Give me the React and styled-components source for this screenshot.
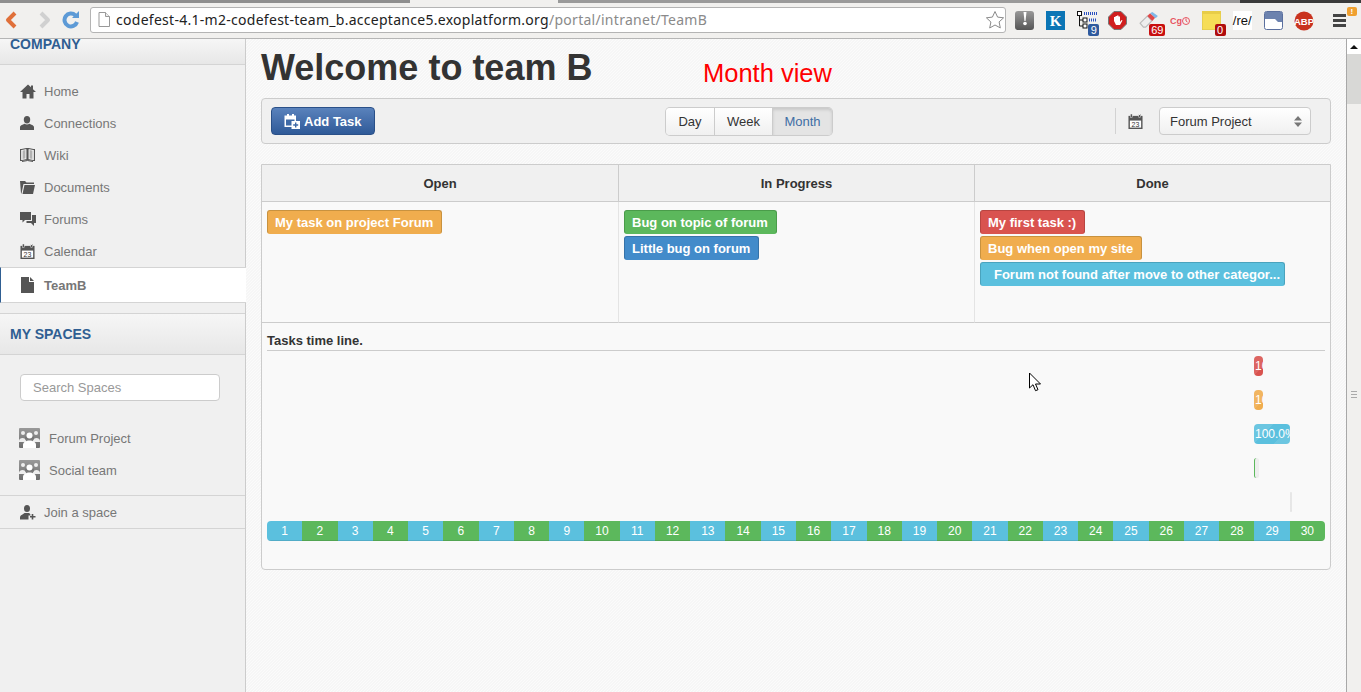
import React from 'react';
import styled, { createGlobalStyle } from 'styled-components';

const GlobalStyle = createGlobalStyle`
  html, body { margin: 0; padding: 0; height: 100%; overflow: hidden; }
  body { font-family: "Liberation Sans", Arial, sans-serif; color: #333; }
  * { box-sizing: border-box; }
`;

const Page = styled.div`
  width: 1361px;
  height: 692px;
  display: flex;
  flex-direction: column;
  position: relative;
  overflow: hidden;
`;

/* browser chrome */
const Tabs = styled.div`
  height: 3px;
  display: flex;
  background: #f1f0ee;
`;
const TabEdge = styled.div`
  background: ${p => p.$color};
  width: ${p => p.$width}px;
  ${p => p.$grow && 'flex: 1;'}
`;
const Toolbar = styled.div`
  height: 36px;
  display: flex;
  align-items: center;
  padding: 0 0 2px 4px;
  background: #f1f0ee;
  border-bottom: 1px solid #b5b5b5;
`;
const NavIcon = styled.svg`
  flex: none;
  margin-right: ${p => p.$gap}px;
`;
const Omnibox = styled.div`
  width: 916px;
  height: 26px;
  margin-left: 2px;
  display: flex;
  align-items: center;
  background: #fff;
  border: 1px solid #b4b4b4;
  border-radius: 3px;
  padding: 0 0 0 7px;
  font-family: "Noto Sans", "DejaVu Sans", sans-serif;
  font-size: 14px;
  letter-spacing: 0.02em;
  color: #222;
  white-space: nowrap;
`;
const UrlPath = styled.span`
  color: #8a8a8a;
`;
const UrlText = styled.span`
  margin-left: 6px;
  flex: 1;
  overflow: hidden;
`;
const Extensions = styled.div`
  display: flex;
  align-items: center;
  margin: 2px 0 0 3px;
`;
const ExtSlot = styled.div`
  width: 31.1px;
  height: 24px;
  display: flex;
  align-items: center;
  justify-content: center;
  position: relative;
  flex: none;
`;
const Badge = styled.span`
  position: absolute;
  right: ${p => p.$right ?? 0}px;
  bottom: -3px;
  min-width: 11px;
  text-align: center;
  background: ${p => p.$color};
  color: #fff;
  font: 11px/10px "Liberation Sans", sans-serif;
  padding: 1px 2px;
  border-radius: 2px;
`;
const ReIcon = styled.span`
  width: 19px;
  height: 19px;
  background: #fff;
  color: #111;
  font: 13px/19px "Liberation Sans", sans-serif;
  text-align: center;
  white-space: nowrap;
`;
const MenuBars = styled.div`
  width: 13px;
  height: 13px;
  margin-left: 13px;
  position: relative;
  background: repeating-linear-gradient(#444 0 3px, transparent 3px 5px);
`;
const UpdateDot = styled.span`
  position: absolute;
  top: -7px;
  right: -11px;
  width: 10px;
  height: 9px;
  border-radius: 2px;
  background: #f0a030;
  color: #fff;
  font: bold 8px/9px "Liberation Sans", sans-serif;
  text-align: center;
`;

/* page body */
const Body = styled.div`
  flex: 1;
  display: flex;
  min-height: 0;
`;
const Sidebar = styled.aside`
  width: 246px;
  flex: none;
  background: #f0f0f0;
  border-right: 1px solid #ccc;
`;
const SideHead = styled.div`
  display: flex;
  align-items: center;
  height: ${p => p.$height}px;
  padding: ${p => p.$pad || '0'};
  padding-left: 10px;
  font-size: 14px;
  font-weight: bold;
  color: #2f5e92;
  background: linear-gradient(#f6f6f6, #e7e7e7);
  border-bottom: 1px solid #d4d4d4;
  ${p => p.$top && 'border-top: 1px solid #d4d4d4;'}
`;
const NavList = styled.nav`
  padding-top: 10px;
`;
const NavItem = styled.div`
  height: 32px;
  display: flex;
  align-items: center;
  padding-left: 20px;
  font-size: 13px;
  color: #777;
`;
const NavGlyph = styled.span`
  width: 24px;
  flex: none;
  display: flex;
  align-items: center;
  color: #555;
  font-size: 14px;
`;
const ActiveItem = styled(NavItem)`
  height: 36px;
  background: #fff;
  border-top: 1px solid #d4d4d4;
  border-bottom: 1px solid #d4d4d4;
  border-left: 1px solid #2f5e92;
  padding-left: 19px;
  margin: 0 -1px 10px 0;
  font-weight: bold;
  position: relative;
`;
const SearchBox = styled.div`
  margin: 19px 25px 0 20px;
  height: 27px;
  padding-left: 12px;
  display: flex;
  align-items: center;
  background: #fff;
  border: 1px solid #ccc;
  border-radius: 4px;
  font-size: 13px;
  color: #999;
`;
const SpaceList = styled.div`
  padding-top: 21px;
  margin-bottom: 9px;
`;
const SpaceItem = styled(NavItem)`
  gap: 9px;
  padding-left: 19px;
`;
const JoinItem = styled(NavItem)`
  height: 34px;
  border-top: 1px solid #d4d4d4;
  border-bottom: 1px solid #d4d4d4;
`;

const Main = styled.main`
  flex: 1;
  min-width: 0;
  padding: 0 15px;
  background-color: #fbfbfb;
  background-image: linear-gradient(135deg, #f6f6f6 25%, transparent 25%, transparent 50%, #f6f6f6 50%, #f6f6f6 75%, transparent 75%);
  background-size: 3px 3px;
  position: relative;
`;
const Title = styled.h1`
  margin: 0;
  height: 59px;
  padding-top: 9px;
  font-size: 36px;
  line-height: 40px;
  font-weight: bold;
  color: #333;
`;
const Annotation = styled.span`
  position: absolute;
  left: 457px;
  top: 20px;
  font-size: 25.5px;
  line-height: 28px;
  color: #f00;
`;
const ActionBar = styled.div`
  height: 46px;
  display: flex;
  align-items: center;
  padding: 0 19px 0 9px;
  background: #f0f0f0;
  border: 1px solid #ccc;
  border-radius: 4px;
`;
const AddButton = styled.button`
  width: 104px;
  height: 28px;
  display: flex;
  align-items: center;
  gap: 4px;
  padding: 0 0 0 12px;
  font: bold 13px "Liberation Sans", sans-serif;
  color: #fff;
  background: linear-gradient(#5a82bc, #2f5a98);
  border: 1px solid #2a5088;
  border-radius: 4px;
`;
const ViewGroup = styled.div`
  display: flex;
  height: 27px;
  margin-left: 291px;
  border-radius: 4px;
  box-shadow: 0 0 0 1px #ccc;
`;
const ViewButton = styled.div`
  display: flex;
  align-items: center;
  justify-content: center;
  width: ${p => p.$width}px;
  font-size: 13px;
  color: ${p => (p.$active ? '#3f6ea5' : '#333')};
  background: ${p => (p.$active ? '#e4e4e4' : 'linear-gradient(#fff, #f0f0f0)')};
  box-shadow: ${p => (p.$active ? 'inset 0 2px 3px rgba(0,0,0,.12)' : 'none')};
  & + & { border-left: 1px solid #ccc; }
  &:first-child { border-radius: 4px 0 0 4px; }
  &:last-child { border-radius: 0 4px 4px 0; }
`;
const ProjectPicker = styled.div`
  margin-left: auto;
  display: flex;
  align-items: center;
`;
const Divider = styled.div`
  width: 1px;
  height: 26px;
  background: #d2d2d2;
  margin-right: 12px;
`;
const SelectBox = styled.div`
  width: 152px;
  height: 28px;
  margin-left: 16px;
  padding: 0 8px 0 10px;
  display: flex;
  align-items: center;
  justify-content: space-between;
  font-size: 13px;
  color: #333;
  background: linear-gradient(#fff, #f0f0f0);
  border: 1px solid #ccc;
  border-radius: 4px;
`;

const Board = styled.section`
  margin-top: 20px;
  height: 406px;
  background: #f9f9f9;
  border: 1px solid #ccc;
  border-radius: 0 0 4px 4px;
`;
const Columns = styled.div`
  display: grid;
  grid-template-columns: 356px 356px 1fr;
`;
const ColHead = styled.div`
  height: 37px;
  display: flex;
  align-items: center;
  justify-content: center;
  font-size: 13px;
  font-weight: bold;
  background: #f0f0f0;
  border-bottom: 1px solid #ccc;
  & + & { border-left: 1px solid #ccc; }
`;
const ColBody = styled.div`
  height: 121px;
  padding: 8px 5px 0;
  display: flex;
  flex-direction: column;
  align-items: flex-start;
  gap: 2px;
  border-bottom: 1px solid #ccc;
  &:not(:nth-child(4)) { border-left: 1px solid #e4e4e4; }
`;
const TaskChip = styled.div`
  height: 24px;
  display: flex;
  align-items: center;
  justify-content: ${p => (p.$wide ? 'flex-end' : 'flex-start')};
  width: ${p => (p.$wide ? '305px' : 'auto')};
  padding: ${p => (p.$wide ? '0 4px 0 0' : '0 8px 0 7px')};
  font-size: 13px;
  font-weight: bold;
  color: #fff;
  white-space: nowrap;
  background: ${p => p.$color};
  border: 1px solid ${p => p.$edge};
  border-bottom-color: ${p => p.$color};
  border-radius: 3px;
`;
const Timeline = styled.div`
  padding: 10px 5px 0;
`;
const TimelineTitle = styled.div`
  height: 18px;
  font-size: 13px;
  line-height: 15px;
  font-weight: bold;
  border-bottom: 1px solid #ccc;
`;
const GanttRows = styled.div`
  padding: 5px 0 9px;
  display: flex;
  flex-direction: column;
  gap: 14px;
`;
const GanttRow = styled.div`
  height: 20px;
  display: flex;
`;
const GanttBar = styled.div`
  height: 20px;
  border-radius: 4px;
  overflow: hidden;
  font-size: 12px;
  line-height: 20px;
  color: #fff;
  white-space: nowrap;
  padding-left: 1px;
  background-color: ${p => p.$color};
  background-image: linear-gradient(135deg, rgba(255,255,255,.1) 25%, transparent 25%, transparent 50%, rgba(255,255,255,.1) 50%, rgba(255,255,255,.1) 75%, transparent 75%);
  background-size: 40px 40px;
`;
const DayStrip = styled.div`
  display: flex;
  height: 20px;
  border-radius: 4px;
  overflow: hidden;
`;
const DayCell = styled.div`
  flex: 1;
  display: flex;
  align-items: center;
  justify-content: center;
  font-size: 12px;
  color: #fff;
  background: ${p => (p.$odd ? '#5bc0de' : '#5cb85c')};
  box-shadow: inset 0 -1px 0 rgba(0, 0, 0, 0.1);
`;

const Scrollbar = styled.div`
  width: 15px;
  flex: none;
  background: #f1f0ee;
  border-left: 1px solid #a8a8a8;
  display: flex;
  flex-direction: column;
  position: relative;
`;
const ScrollUp = styled.div`
  height: 15px;
  background: #fff;
  display: flex;
  align-items: center;
  justify-content: center;
  &::before {
    content: '';
    border: 4px solid transparent;
    border-top: 0;
    border-bottom: 4px solid #111;
  }
`;
const ScrollThumb = styled.div`
  height: 50px;
  background: #d8d8d6;
`;
const ScrollGrip = styled.div`
  position: absolute;
  top: 352px;
  left: 4px;
  width: 6px;
  height: 7px;
  background: repeating-linear-gradient(#aaa 0 1px, transparent 1px 3px);
`;
const Cursor = styled.svg`
  position: absolute;
  left: 1028px;
  top: 372px;
`;

const CalendarIcon = ({ size = 16, color = '#555' }) => (
  <svg width={size} height={size} viewBox="0 0 16 16">
    <rect x="0.500" y="2" width="15" height="14" fill={color} />
    <rect x="2.500" y="0" width="2" height="4" fill={color} stroke="#f0f0f0" strokeWidth="0.500" />
    <rect x="11.500" y="0" width="2" height="4" fill={color} stroke="#f0f0f0" strokeWidth="0.500" />
    <rect x="2" y="7" width="12" height="7.500" fill="#fff" />
    <text x="8" y="13.500" textAnchor="middle" fontSize="7.500" fontFamily="Liberation Sans" fill="#333">23</text>
  </svg>
);

const HomeIcon = () => (
  <svg width="16" height="15" viewBox="0 0 16 15">
    <path d="M8 .5L0 8h2.500v6.500H6.500V10h3v4.500h4V8H16l-3-2.800V1.500h-2v1.800z" fill="#555" />
  </svg>
);

const UserIcon = () => (
  <svg width="14" height="14" viewBox="0 0 14 14">
    <ellipse cx="7" cy="3.700" rx="3.200" ry="3.700" fill="#555" />
    <path d="M0 14v-2.500C0 9 3 8.800 4.500 7.800c1.500 1 3.500 1 5 0C11 8.800 14 9 14 11.500V14z" fill="#555" />
  </svg>
);

const BookIcon = () => (
  <svg width="15" height="14" viewBox="0 0 15 14">
    <path d="M.6 1.500h1l5.400-1v11l-5.400 1h-1zM14.400 1.500h-1L8 .5v11l5.400 1h1z" fill="#fff" stroke="#555" strokeWidth="1.200" />
    <path d="M2 13.500l5.500-1 5.500 1" fill="none" stroke="#555" />
    <path d="M2.500 2.500l3-.5v8.500l-3 .5zM12.500 2.500l-3-.5v8.500l3 .5z" fill="#555" opacity=".45" />
  </svg>
);

const FolderIcon = () => (
  <svg width="15" height="13" viewBox="0 0 15 13">
    <path d="M0 0h5l1.500 1.500H14V3H3.500L1.500 12.500H1z" fill="#555" />
    <path d="M4.500 4H15l-2 9H2.500z" fill="#555" />
  </svg>
);

const ForumsIcon = () => (
  <svg width="16" height="14" viewBox="0 0 16 14">
    <path d="M0 0h11v8H5L2.500 10.500V8H0z" fill="#555" />
    <path d="M12 3h4v8h-2v3l-3-3H6.500v-2H12z" fill="#555" />
  </svg>
);

const PageIcon = () => (
  <svg width="15" height="16" viewBox="0 0 15 16">
    <path d="M1 0h8v5h5v11H1z" fill="#555" />
    <path d="M10 0l4 4h-4z" fill="#555" />
  </svg>
);

const JoinIcon = () => (
  <svg width="16" height="15" viewBox="0 0 16 15">
    <ellipse cx="7" cy="3.500" rx="3" ry="3.500" fill="#555" />
    <path d="M0 14.500v-2C0 10 3 9.500 4.500 8h4.500c1 .8 1.500 1.200 1.500 2.500h-2v4z" fill="#555" />
    <path d="M12.500 9v5.500M10 11.800h5.500" stroke="#555" strokeWidth="1.600" />
  </svg>
);

const AddTaskIcon = () => (
  <svg width="16" height="15" viewBox="0 0 16 15">
    <rect x="0.500" y="1.500" width="11.500" height="11.500" fill="#fff" />
    <rect x="2" y="5.500" width="8.500" height="6" fill="#3f6aa6" />
    <rect x="3" y="0" width="2" height="3" fill="#fff" />
    <rect x="8" y="0" width="2" height="3" fill="#fff" />
    <rect x="7.500" y="7" width="8.500" height="8" fill="#fff" />
    <path d="M11.700 8.500v5M9.200 11h5" stroke="#3f6aa6" strokeWidth="1.400" />
  </svg>
);

const SpaceIcon = () => (
  <svg width="21" height="20" viewBox="0 0 21 20">
    <defs>
      <linearGradient id="spaceBg" x1="0" y1="0" x2="0" y2="1">
        <stop offset="0" stopColor="#999" />
        <stop offset="1" stopColor="#6e6e6e" />
      </linearGradient>
    </defs>
    <rect width="21" height="20" rx="1" fill="url(#spaceBg)" />
    <circle cx="4" cy="5" r="2" fill="#eee" />
    <circle cx="17" cy="5" r="2" fill="#eee" />
    <path d="M0 13c0-4 7-4 7 0v1H0zM14 13c0-4 7-4 7 0v1h-7z" fill="#eee" />
    <path d="M6 8.500h9v3H6z" fill="#777" />
    <circle cx="10.500" cy="7.500" r="3" fill="#fff" />
    <path d="M4 20v-3c0-6 13-6 13 0v3z" fill="#fff" />
  </svg>
);

const navItems = [
  { label: 'Home', icon: <HomeIcon /> },
  { label: 'Connections', icon: <UserIcon /> },
  { label: 'Wiki', icon: <BookIcon /> },
  { label: 'Documents', icon: <FolderIcon /> },
  { label: 'Forums', icon: <ForumsIcon /> },
  { label: 'Calendar', icon: <CalendarIcon size={15} /> }
];

const columns = [
  { title: 'Open', tasks: [{ text: 'My task on project Forum', color: '#f0ad4e', edge: '#c8923f' }] },
  {
    title: 'In Progress',
    tasks: [
      { text: 'Bug on topic of forum', color: '#5cb85c', edge: '#4a9c4a' },
      { text: 'Little bug on forum', color: '#428bca', edge: '#3572a8' }
    ]
  },
  {
    title: 'Done',
    tasks: [
      { text: 'My first task :)', color: '#d9534f', edge: '#b84541' },
      { text: 'Bug when open my site', color: '#f0ad4e', edge: '#c8923f' },
      { text: 'Forum not found after move to other categor...', color: '#5bc0de', edge: '#4aa3bd', wide: true }
    ]
  }
];

const ganttBars = [
  { left: 987, width: 9, color: '#d9534f', label: '100.0%' },
  { left: 987, width: 9, color: '#f0ad4e', label: '100.0%' },
  { left: 987, width: 36, color: '#5bc0de', label: '100.0%' },
  { left: 987, width: 5, color: '#ececec', label: '', accent: true },
  { left: 1023, width: 2, color: '#e4e4e4', label: '' }
];

const days = Array.from({ length: 30 }, (_, i) => i + 1);

export default function App() {
  return (
    <Page>
      <GlobalStyle />
      <Tabs>
        <TabEdge $width={410} $color="#8f8f8f" />
        <TabEdge $width={148} $color="#f1f0ee" />
        <TabEdge $width={682} $color="#9a9a9a" />
        <TabEdge $grow $color="#3a3a3a" />
      </Tabs>
      <Toolbar>
        <NavIcon $gap={16} width="16" height="18" viewBox="0 0 16 18">
          <path d="M11 2L4 9l7 7" fill="none" stroke="#e0703a" strokeWidth="4" strokeLinejoin="round" />
        </NavIcon>
        <NavIcon $gap={10} width="16" height="18" viewBox="0 0 16 18">
          <path d="M5 2l7 7-7 7" fill="none" stroke="#d0d0d0" strokeWidth="4" strokeLinejoin="round" />
        </NavIcon>
        <NavIcon $gap={8} width="18" height="18" viewBox="0 0 18 18">
          <path d="M15 11a6.400 6.400 0 1 1-1.600-6.600" fill="none" stroke="#5d9ad6" strokeWidth="4" />
          <path d="M10 7h7V0z" fill="#5d9ad6" />
        </NavIcon>
        <Omnibox>
          <svg width="12" height="15" viewBox="0 0 12 15">
            <path d="M1 .5h6.500l4 4v10H1z" fill="#fff" stroke="#999" />
            <path d="M7.500.5v4h4" fill="#eee" stroke="#999" />
          </svg>
          <UrlText>codefest-4.1-m2-codefest-team_b.acceptance5.exoplatform.org<UrlPath>/portal/intranet/TeamB</UrlPath></UrlText>
          <svg width="20" height="20" viewBox="0 0 20 20">
            <path d="M10 1.500l2.600 5.600 6 .7-4.500 4.100 1.200 6L10 15l-5.300 3 1.200-6L1.400 7.800l6-.7z" fill="#fff" stroke="#8a8a8a" />
          </svg>
        </Omnibox>
        <Extensions>
          <ExtSlot>
            <svg width="19" height="19" viewBox="0 0 19 19">
              <defs>
                <linearGradient id="pinBg" x1="0" y1="0" x2="0" y2="1">
                  <stop offset="0" stopColor="#999" />
                  <stop offset="1" stopColor="#555" />
                </linearGradient>
              </defs>
              <rect width="19" height="19" rx="3" fill="url(#pinBg)" />
              <path d="M8.500 1h3l-1 9H9.500z" fill="#fff" />
              <circle cx="10" cy="12.500" r="1.800" fill="#fff" />
            </svg>
          </ExtSlot>
          <ExtSlot>
            <svg width="19" height="19" viewBox="0 0 19 19">
              <rect width="19" height="19" fill="#0b75b5" />
              <text x="9.500" y="15" textAnchor="middle" fontSize="15" fontWeight="bold" fontFamily="Liberation Serif" fill="#fff">K</text>
            </svg>
          </ExtSlot>
          <ExtSlot>
            <svg width="20" height="19" viewBox="0 0 20 19">
              <path d="M2.500 3v12h4M2.500 9h4" fill="none" stroke="#111" />
              <rect x="0.500" y="0.500" width="4" height="4" fill="#fff" stroke="#111" />
              <rect x="6" y="7" width="4" height="4" fill="#fff" stroke="#111" />
              <rect x="6" y="13" width="4" height="4" fill="#fff" stroke="#111" />
              <path d="M7 2.500h13M12 9h8" stroke="#2a50c0" strokeWidth="3" strokeDasharray="1 1" />
            </svg>
            <Badge $color="#2f5a9e" $right={3}>9</Badge>
          </ExtSlot>
          <ExtSlot>
            <svg width="19" height="19" viewBox="0 0 19 19">
              <path d="M6 .5h7L18.500 6v7L13 18.500H6L.5 13V6z" fill="#d01f1f" stroke="#777" />
              <path d="M6 10V6h1.500v3V5h1.500v4V4.500h1.500V9V5.500H12V11l1.500-2 1 .5L12 14H8z" fill="#fff" />
            </svg>
          </ExtSlot>
          <ExtSlot>
            <svg width="20" height="18" viewBox="0 0 18 16">
              <path d="M1 10l6.500-6.500 4 4.500-5.500 5.500H4z" fill="#eee" stroke="#bbb" />
              <path d="M7.500 3.500l2.500-2.500 4.500 4-2.500 3z" fill="#e04848" />
              <path d="M10 1l2-1 5 3.500-2 2z" fill="#7fb8e8" />
            </svg>
            <Badge $color="#c80f0f" $right={-1}>69</Badge>
          </ExtSlot>
          <ExtSlot>
            <svg width="20" height="12" viewBox="0 0 20 12">
              <text x="0" y="9" fontSize="9" fontWeight="bold" fontFamily="Liberation Sans" fill="#e8535f">Cg</text>
              <circle cx="16" cy="6" r="3.500" fill="none" stroke="#e8535f" />
              <path d="M16 3.500V6l1.500 1" fill="none" stroke="#e8535f" />
            </svg>
          </ExtSlot>
          <ExtSlot>
            <svg width="19" height="19" viewBox="0 0 19 19">
              <rect width="19" height="19" fill="#f6dd57" stroke="#d8c24c" />
              <rect width="19" height="3" fill="#e8cd48" />
            </svg>
            <Badge $color="#b00c0c" $right={1}>0</Badge>
          </ExtSlot>
          <ExtSlot><ReIcon>/re/</ReIcon></ExtSlot>
          <ExtSlot>
            <svg width="19" height="19" viewBox="0 0 19 19">
              <rect x="0.500" y="0.500" width="18" height="18" rx="2" fill="#fff" stroke="#5a6f9e" />
              <path d="M1 1h17v10h-4l-3-3H1z" fill="#6c82ae" />
            </svg>
          </ExtSlot>
          <ExtSlot>
            <svg width="20" height="20" viewBox="0 0 20 20">
              <circle cx="10" cy="10" r="9.500" fill="#c9331f" />
              <text x="10" y="13.500" textAnchor="middle" fontSize="9.500" fontWeight="bold" fontFamily="Liberation Sans" fill="#fff">ABP</text>
            </svg>
          </ExtSlot>
          <MenuBars><UpdateDot>!</UpdateDot></MenuBars>
        </Extensions>
      </Toolbar>
      <Body>
        <Sidebar>
          <SideHead $height={26} $pad="0 0 16px">COMPANY</SideHead>
          <NavList>
            {navItems.map(item => (
              <NavItem key={item.label}>
                <NavGlyph>{item.icon}</NavGlyph>
                {item.label}
              </NavItem>
            ))}
            <ActiveItem>
              <NavGlyph><PageIcon /></NavGlyph>
              TeamB
            </ActiveItem>
          </NavList>
          <SideHead $height={42} $top>MY SPACES</SideHead>
          <SearchBox>Search Spaces</SearchBox>
          <SpaceList>
            <SpaceItem><SpaceIcon />Forum Project</SpaceItem>
            <SpaceItem><SpaceIcon />Social team</SpaceItem>
          </SpaceList>
          <JoinItem>
            <NavGlyph><JoinIcon /></NavGlyph>
            Join a space
          </JoinItem>
        </Sidebar>
        <Main>
          <Title>Welcome to team B</Title>
          <Annotation>Month view</Annotation>
          <ActionBar>
            <AddButton><AddTaskIcon />Add Task</AddButton>
            <ViewGroup>
              <ViewButton $width={48}>Day</ViewButton>
              <ViewButton $width={58}>Week</ViewButton>
              <ViewButton $width={60} $active>Month</ViewButton>
            </ViewGroup>
            <ProjectPicker>
              <Divider />
              <CalendarIcon size={15} />
              <SelectBox>
                Forum Project
                <svg width="8" height="13" viewBox="0 0 8 13">
                  <path d="M4 1l4 4.500H0zM4 12L0 7.500h8z" fill="#777" />
                </svg>
              </SelectBox>
            </ProjectPicker>
          </ActionBar>
          <Board>
            <Columns>
              {columns.map(col => <ColHead key={col.title}>{col.title}</ColHead>)}
              {columns.map(col => (
                <ColBody key={col.title}>
                  {col.tasks.map(task => (
                    <TaskChip key={task.text} $color={task.color} $edge={task.edge} $wide={task.wide}>
                      {task.text}
                    </TaskChip>
                  ))}
                </ColBody>
              ))}
            </Columns>
            <Timeline>
              <TimelineTitle>Tasks time line.</TimelineTitle>
              <GanttRows>
                {ganttBars.map((bar, i) => (
                  <GanttRow key={i}>
                    <GanttBar
                      $color={bar.color}
                      style={{
                        marginLeft: bar.left,
                        width: bar.width,
                        borderLeft: bar.accent ? '1px solid #5cb85c' : undefined
                      }}
                    >
                      {bar.label}
                    </GanttBar>
                  </GanttRow>
                ))}
              </GanttRows>
              <DayStrip>
                {days.map(d => <DayCell key={d} $odd={d % 2 === 1}>{d}</DayCell>)}
              </DayStrip>
            </Timeline>
          </Board>
        </Main>
        <Scrollbar>
          <ScrollUp />
          <ScrollThumb />
          <ScrollGrip />
        </Scrollbar>
      </Body>
      <Cursor width="14" height="20" viewBox="0 0 14 20">
        <path d="M1.500 1v15l3.500-3.300 2.500 6 2.500-1-2.500-5.700h5z" fill="#fff" stroke="#000" />
      </Cursor>
    </Page>
  );
}
